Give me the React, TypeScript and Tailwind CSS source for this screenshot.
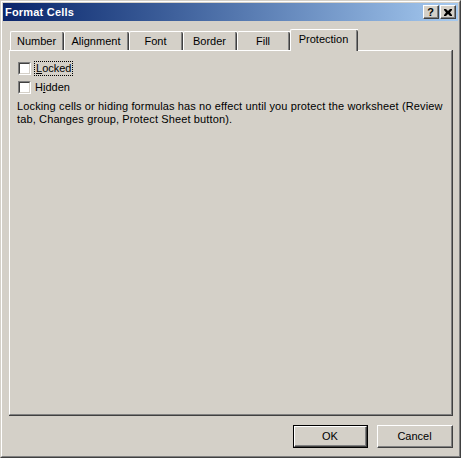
import React from "react";

const font = { fontFamily: '"Liberation Sans", Arial, sans-serif' };

function Checkbox() {
  return (
    <div className="w-[13px] h-[13px] border-t border-l border-t-[#808080] border-l-[#808080] border-r border-b border-r-white border-b-white">
      <div className="w-full h-full bg-white border-t border-l border-t-[#404040] border-l-[#404040] border-r border-b border-r-[#d4d0c8] border-b-[#d4d0c8]" />
    </div>
  );
}

function TitleButton({ children }: { children: React.ReactNode }) {
  return (
    <div className="w-[16px] h-[14px] bg-[#d4d0c8] border-t border-l border-t-white border-l-white border-r border-b border-r-[#404040] border-b-[#404040]">
      <div className="w-full h-full border-r border-b border-r-[#808080] border-b-[#808080] flex items-center justify-center text-black">
        {children}
      </div>
    </div>
  );
}

function Tab({ label, width, selected }: { label: string; width: number; selected?: boolean }) {
  if (selected) {
    return (
      <div
        className="relative z-10 h-[22px] -mb-px bg-[#d4d0c8] border-t border-l border-t-white border-l-white rounded-tl-[2px]"
        style={{ width }}
      >
        <div className="h-full border-r border-r-[#404040] rounded-tr-[2px]">
          <div className="h-full border-r border-r-[#808080] flex items-center justify-center text-[11px] text-black pb-[2px]">
            {label}
          </div>
        </div>
      </div>
    );
  }
  return (
    <div
      className="h-[19px] bg-[#d4d0c8] border-t border-l border-t-white border-l-white rounded-tl-[2px]"
      style={{ width }}
    >
      <div className="h-full border-r border-r-[#404040] rounded-tr-[2px]">
        <div className="h-full border-r border-r-[#808080] flex items-center justify-center text-[11px] text-black pt-[1px]">
          {label}
        </div>
      </div>
    </div>
  );
}

function Button({ label, isDefault, width }: { label: string; isDefault?: boolean; width: number }) {
  const inner = (
    <div className="h-full border-t border-l border-t-white border-l-white border-r border-b border-r-[#404040] border-b-[#404040]">
      <div className="h-full border-r border-b border-r-[#808080] border-b-[#808080] flex items-center justify-center text-[11px] text-black">
        {label}
      </div>
    </div>
  );
  return (
    <div className="h-[23px] bg-[#d4d0c8]" style={{ width }}>
      {isDefault ? <div className="h-full border border-black">{inner}</div> : inner}
    </div>
  );
}

export default function App() {
  return (
    <div style={font} className="w-[461px] h-[458px] bg-[#d4d0c8] border-t border-l border-t-[#d4d0c8] border-l-[#d4d0c8] border-r border-b border-r-[#404040] border-b-[#404040]">
      <div className="w-full h-full border-t border-l border-t-white border-l-white border-r border-b border-r-[#808080] border-b-[#808080] p-px flex flex-col">
        {/* title bar */}
        <div className="h-[18px] shrink-0 flex items-center justify-between pl-[2px] pr-[2px] bg-gradient-to-r from-[#0a246a] to-[#a6caf0]">
          <span className="text-white font-bold text-[11px] leading-none tracking-[0.2px]">Format Cells</span>
          <div className="flex gap-[1px] items-center">
            <TitleButton>
              <span className="font-bold text-[11px] leading-none mt-[1px]">?</span>
            </TitleButton>
            <TitleButton>
              <svg width="8" height="7" viewBox="0 0 8 7" className="mt-[1px]">
                <path d="M0 0h2l2 2 2-2h2v1L6 3.5 8 6v1H6L4 5 2 7H0V6l2-2.5L0 1z" fill="#000" />
              </svg>
            </TitleButton>
          </div>
        </div>

        {/* body */}
        <div className="flex-1 flex flex-col pl-[6px] pr-[5px]">
          {/* tabs */}
          <div className="flex items-end pl-[1px] mt-[7px] h-[22px]">
            <Tab label="Number" width={54} />
            <Tab label="Alignment" width={65} />
            <Tab label="Font" width={54} />
            <Tab label="Border" width={54} />
            <Tab label="Fill" width={53} />
            <Tab label="Protection" width={68} selected />
          </div>

          {/* panel */}
          <div className="h-[366px] border-r border-b border-r-[#404040] border-b-[#404040]">
            <div className="h-full border-t border-l border-t-white border-l-white border-r border-b border-r-[#808080] border-b-[#808080] pt-[10px] pl-[8px] text-[11px] text-black">
              <div className="flex items-center h-[15px] gap-[3px]">
                <Checkbox />
                <span className="border border-dotted border-black px-[1px] leading-[13px]">
                  <span className="underline">L</span>ocked
                </span>
              </div>
              <div className="flex items-center h-[15px] gap-[4px] mt-[4px]">
                <Checkbox />
                <span className="leading-[13px]">
                  H<span className="underline">i</span>dden
                </span>
              </div>
              <div className="mt-[5px] -ml-[1px] leading-[13px] whitespace-nowrap tracking-[0.13px]">
                <div>Locking cells or hiding formulas has no effect until you protect the worksheet (Review</div>
                <div>tab, Changes group, Protect Sheet button).</div>
              </div>
            </div>
          </div>

          {/* buttons */}
          <div className="flex justify-end gap-[9px] mt-[9px]">
            <Button label="OK" width={75} isDefault />
            <Button label="Cancel" width={76} />
          </div>
        </div>
      </div>
    </div>
  );
}
